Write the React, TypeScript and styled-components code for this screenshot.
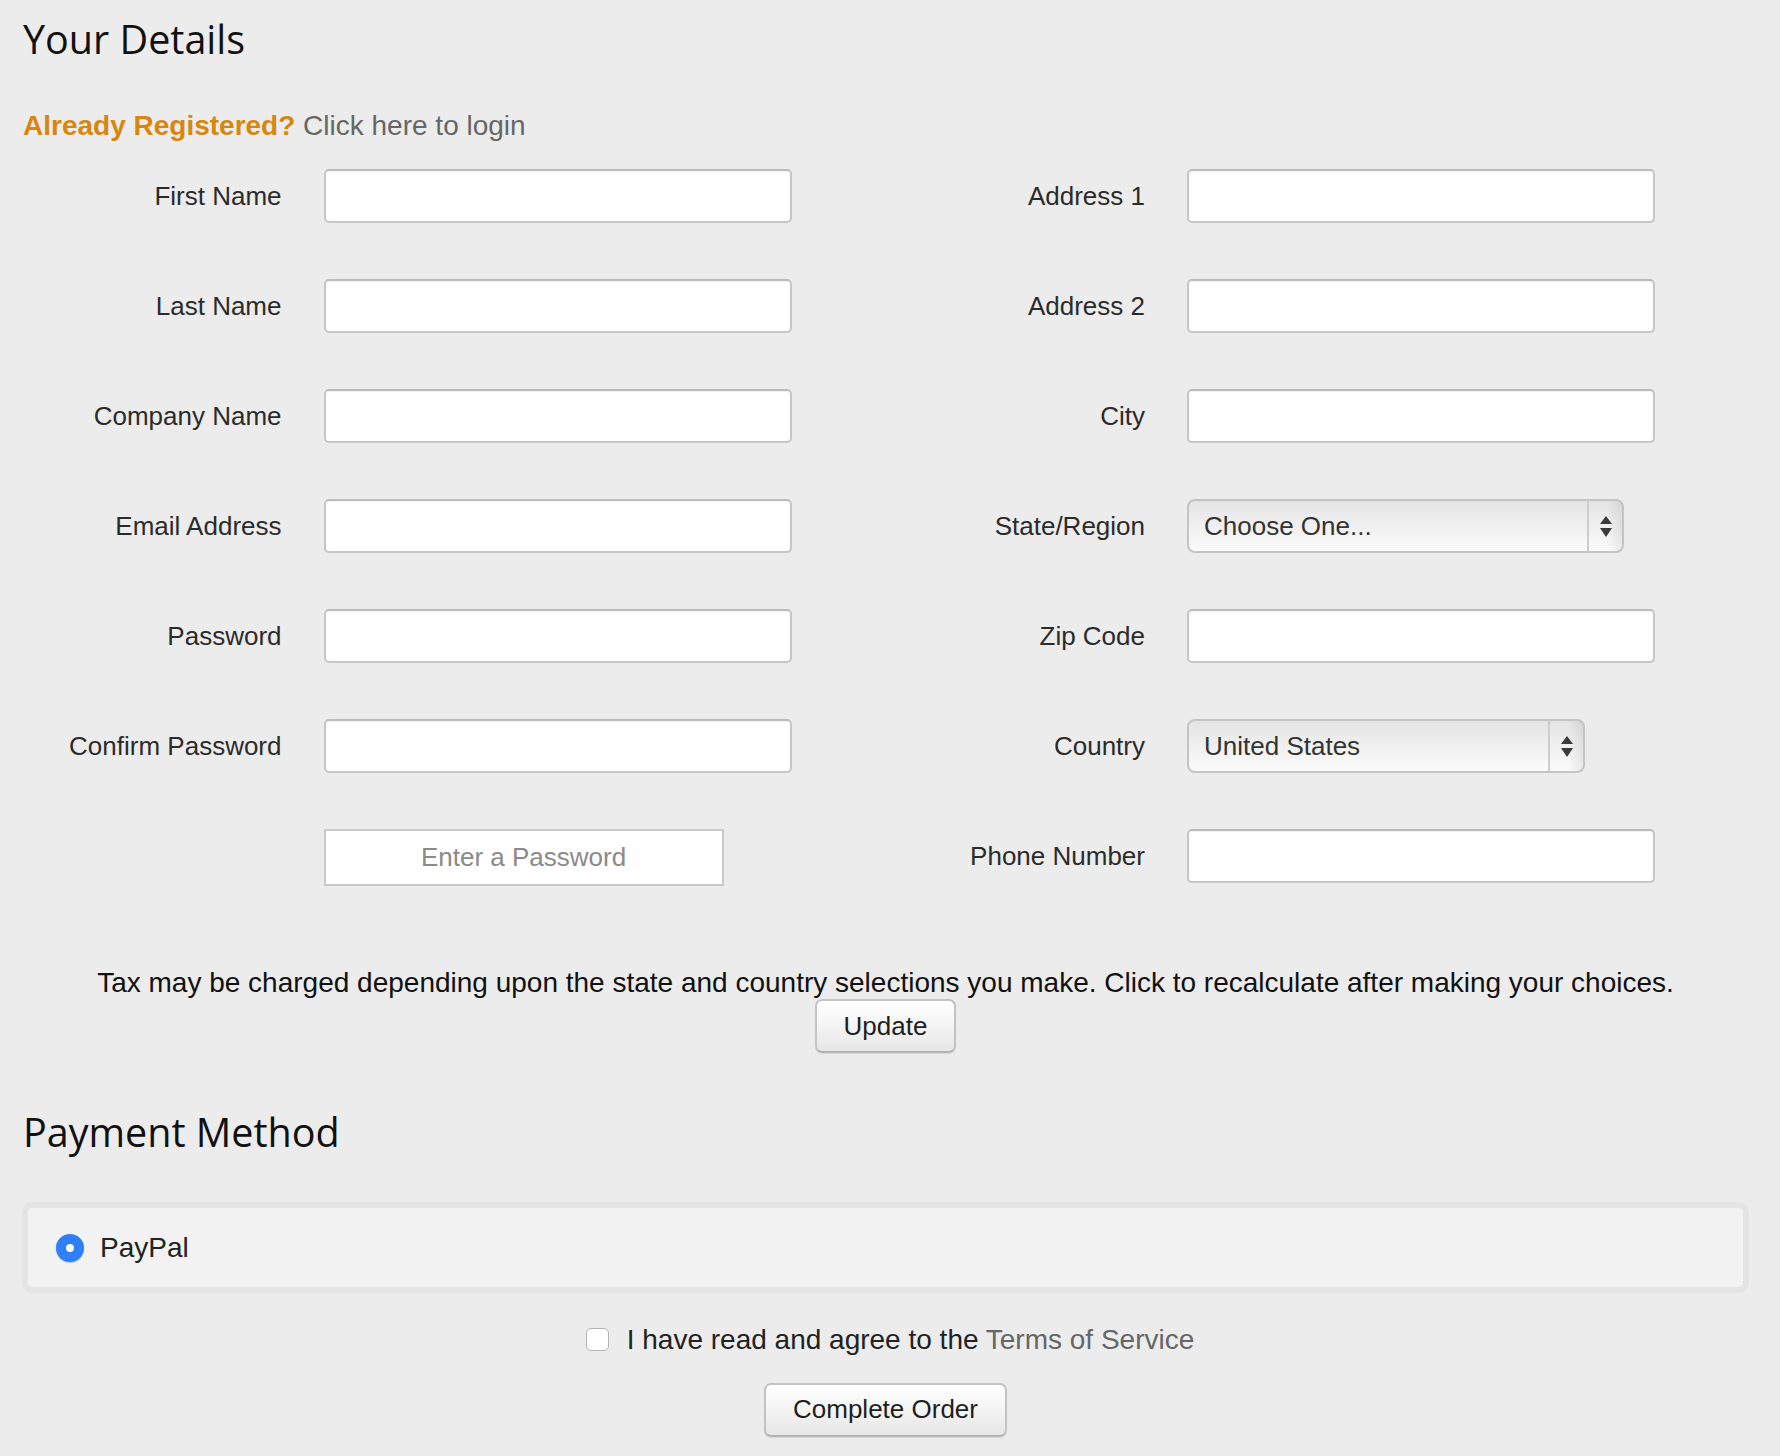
import React from "react";
import styled, { createGlobalStyle } from "styled-components";

const GlobalStyle = createGlobalStyle`
  *, *::before, *::after { box-sizing: border-box; }
  html, body { margin: 0; padding: 0; background: #ececec; }
  body {
    font-family: "Liberation Sans", Arial, Helvetica, sans-serif;
    color: #222;
  }
`;

const Page = styled.main`
  width: 1727px;
  margin-left: 22px;
  padding-top: 15px;
  padding-bottom: 20px;
`;

const SectionTitle = styled.h2<{ $gap?: number }>`
  margin: ${(p) => p.$gap ?? 0}px 0 0 0;
  padding-left: 1px;
  font-family: "Open Sans", "Noto Sans", sans-serif;
  font-weight: 400;
  font-size: 39.5px;
  line-height: 48px;
  color: #111;
`;

const LoginLine = styled.p`
  margin: 47px 0 0 1px;
  font-size: 28px;
  line-height: 32px;
  color: #666;
`;

const Accent = styled.strong`
  color: #d8870e;
  font-weight: 700;
`;

const MutedLink = styled.a`
  color: #666;
  text-decoration: none;
`;

const FormGrid = styled.div`
  margin-top: 27px;
  display: grid;
  grid-template-columns: 1fr 1fr;
  row-gap: 56px;
  align-items: start;
`;

const FieldRow = styled.div`
  display: grid;
  grid-template-columns: 259.5px 468px;
  column-gap: 42px;
  align-items: center;
`;

const Label = styled.label`
  text-align: right;
  font-size: 26px;
  line-height: 30px;
  color: #2b2b2b;
`;

const TextInput = styled.input`
  width: 468px;
  height: 54px;
  border: 2px solid #c6c6c6;
  border-top-color: #bcbcbc;
  border-radius: 5px;
  background: #fff;
  box-shadow: inset 0 1px 2px rgba(0, 0, 0, 0.06);
  font-family: "Liberation Sans", Arial, sans-serif;
  font-size: 26px;
  padding: 0 14px;
  outline: none;
`;

const SelectBox = styled.div<{ $width: number }>`
  width: ${(p) => p.$width}px;
  height: 54px;
  display: flex;
  border: 2px solid #c4c4c4;
  border-radius: 8px;
  background: linear-gradient(#e4e4e4, #f2f2f2 60%, #fbfbfb);
  overflow: hidden;
`;

const NativeSelect = styled.select`
  flex: 1;
  min-width: 0;
  height: 100%;
  appearance: none;
  -webkit-appearance: none;
  border: 0;
  background: transparent;
  padding: 0 0 1px 15px;
  font-family: "Liberation Sans", Arial, sans-serif;
  font-size: 26px;
  color: #333;
  outline: none;
`;

const ArrowCell = styled.span`
  width: 35px;
  flex: none;
  display: flex;
  align-items: center;
  justify-content: center;
  border-left: 2px solid #cdcdcd;
  background: linear-gradient(to right, rgba(0, 0, 0, 0) 55%, rgba(0, 0, 0, 0.07));
`;

const StrengthBox = styled.div`
  width: 400px;
  height: 57px;
  display: flex;
  align-items: center;
  justify-content: center;
  border: 2px solid #c8c8c8;
  background: #fff;
  font-size: 26px;
  color: #8a8a8a;
`;

const TaxNote = styled.p`
  margin: 81px 0 0 0;
  text-align: center;
  font-size: 28px;
  line-height: 32px;
  color: #111;
`;

const Center = styled.div<{ $gap?: number }>`
  margin-top: ${(p) => p.$gap ?? 0}px;
  display: flex;
  justify-content: center;
`;

const Button = styled.button<{ $height?: number }>`
  height: ${(p) => p.$height ?? 54}px;
  padding: 0 27px;
  border: 2px solid #c3c3c3;
  border-bottom-color: #b2b2b2;
  border-radius: 7px;
  background: linear-gradient(#ffffff, #f4f4f4 50%, #e6e6e6);
  box-shadow: 0 1px 1px rgba(0, 0, 0, 0.08);
  font-family: "Liberation Sans", Arial, sans-serif;
  font-size: 26px;
  color: #1e1e1e;
  cursor: pointer;
`;

const PaymentPanel = styled.div`
  margin-top: 46.5px;
  height: 91px;
  display: flex;
  align-items: center;
  gap: 16px;
  padding: 0 0 0 28px;
  border: 6px solid #e4e4e4;
  border-radius: 10px;
  background: #f2f2f2;
`;

const Radio = styled.input`
  appearance: none;
  -webkit-appearance: none;
  margin: 0;
  width: 28px;
  height: 28px;
  border-radius: 50%;
  border: 10px solid #2f80f6;
  background: #fff;
  box-shadow: 0 1px 1px rgba(0, 40, 120, 0.25);
`;

const OptionText = styled.label`
  font-size: 28px;
  line-height: 32px;
  color: #222;
`;

const AgreeRow = styled.div`
  margin-top: 30.5px;
  display: flex;
  justify-content: center;
  align-items: center;
  gap: 18px;
  padding-left: 9px;
`;

const Checkbox = styled.input`
  appearance: none;
  -webkit-appearance: none;
  margin: 0;
  width: 23px;
  height: 23px;
  border: 1.5px solid #b3b3b3;
  border-radius: 5px;
  background: #fff;
`;

const AgreeText = styled.label`
  font-size: 28px;
  line-height: 32px;
  color: #222;
`;

const SortArrows = () => (
  <svg width="12" height="21" viewBox="0 0 12 21" aria-hidden="true">
    <path d="M6 0 L12 8 L0 8 Z" fill="#3b3b3b" />
    <path d="M0 12 L12 12 L6 21 Z" fill="#3b3b3b" />
  </svg>
);

type Field =
  | { kind: "text"; label: string }
  | { kind: "select"; label: string; value: string; width: number }
  | { kind: "strength" };

const rows: [Field, Field][] = [
  [{ kind: "text", label: "First Name" }, { kind: "text", label: "Address 1" }],
  [{ kind: "text", label: "Last Name" }, { kind: "text", label: "Address 2" }],
  [{ kind: "text", label: "Company Name" }, { kind: "text", label: "City" }],
  [
    { kind: "text", label: "Email Address" },
    { kind: "select", label: "State/Region", value: "Choose One...", width: 437 },
  ],
  [{ kind: "text", label: "Password" }, { kind: "text", label: "Zip Code" }],
  [
    { kind: "text", label: "Confirm Password" },
    { kind: "select", label: "Country", value: "United States", width: 398 },
  ],
  [{ kind: "strength" }, { kind: "text", label: "Phone Number" }],
];

const FieldCell: React.FC<{ field: Field; id: string }> = ({ field, id }) => {
  if (field.kind === "strength") {
    return (
      <FieldRow>
        <span />
        <StrengthBox>Enter a Password</StrengthBox>
      </FieldRow>
    );
  }
  if (field.kind === "select") {
    return (
      <FieldRow>
        <Label htmlFor={id}>{field.label}</Label>
        <SelectBox $width={field.width}>
          <NativeSelect id={id} defaultValue={field.value}>
            <option>{field.value}</option>
          </NativeSelect>
          <ArrowCell>
            <SortArrows />
          </ArrowCell>
        </SelectBox>
      </FieldRow>
    );
  }
  return (
    <FieldRow>
      <Label htmlFor={id}>{field.label}</Label>
      <TextInput
        id={id}
        type={field.label.includes("Password") ? "password" : "text"}
      />
    </FieldRow>
  );
};

export default function App() {
  return (
    <>
      <GlobalStyle />
      <Page>
        <SectionTitle>Your Details</SectionTitle>
        <LoginLine>
          <Accent>Already Registered?</Accent>{" "}
          <MutedLink href="#login">Click here to login</MutedLink>
        </LoginLine>

        <FormGrid>
          {rows.map(([left, right], i) => (
            <React.Fragment key={i}>
              <FieldCell field={left} id={`l${i}`} />
              <FieldCell field={right} id={`r${i}`} />
            </React.Fragment>
          ))}
        </FormGrid>

        <TaxNote>
          Tax may be charged depending upon the state and country selections you
          make. Click to recalculate after making your choices.
        </TaxNote>
        <Center>
          <Button type="button">Update</Button>
        </Center>

        <SectionTitle $gap={54.5}>Payment Method</SectionTitle>

        <PaymentPanel>
          <Radio type="radio" id="paypal" name="pay" defaultChecked />
          <OptionText htmlFor="paypal">PayPal</OptionText>
        </PaymentPanel>

        <AgreeRow>
          <Checkbox type="checkbox" id="tos" />
          <AgreeText htmlFor="tos">
            I have read and agree to the <MutedLink href="#tos">Terms of Service</MutedLink>
          </AgreeText>
        </AgreeRow>

        <Center $gap={27}>
          <Button type="button" $height={54}>
            Complete Order
          </Button>
        </Center>
      </Page>
    </>
  );
}
